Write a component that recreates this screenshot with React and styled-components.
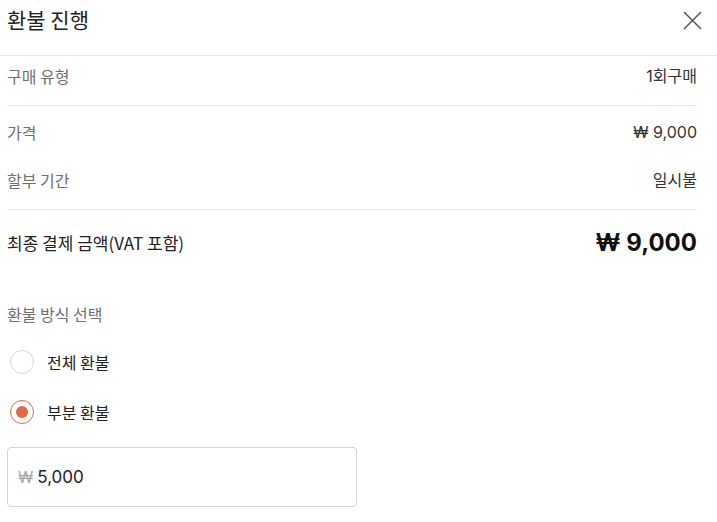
import React, { useState } from "react";
import styled, { createGlobalStyle } from "styled-components";

const Global = createGlobalStyle`
  html, body { margin: 0; padding: 0; background: #fff; }
  body { font-family: "Inter", "Noto Sans CJK KR", sans-serif; color: #222; }
  * { box-sizing: border-box; }
`;

const Panel = styled.div`
  width: 717px;
  background: #fff;
`;

const Header = styled.div`
  height: 56px;
  display: flex;
  align-items: flex-start;
  justify-content: space-between;
  padding: 4px 14px 0 7px;
  border-bottom: 1px solid #e6e6e6;
`;

const Title = styled.h1`
  margin: 0;
  font-size: 21px;
  line-height: 30px;
  font-weight: 400;
  color: #222;
  font-family: "Noto Sans CJK KR", sans-serif;
`;

const CloseButton = styled.button`
  border: 0;
  background: none;
  padding: 0;
  margin-top: 5px;
  width: 22px;
  height: 22px;
  display: flex;
  align-items: center;
  justify-content: center;
  cursor: pointer;
`;

const Body = styled.div`
  padding: 0 20px 0 7px;
`;

const Section = styled.div`
  display: flex;
  flex-direction: column;
  gap: ${(p) => p.$gap || 0}px;
  padding: ${(p) => p.$pad};
  border-bottom: ${(p) => (p.$divider ? "1px solid #e6e6e6" : "none")};
`;

const Row = styled.div`
  display: flex;
  justify-content: space-between;
  align-items: center;
  line-height: 22px;
  font-size: 16px;
`;

const Label = styled.span`
  color: #6f6f6f;
  font-family: "Noto Sans CJK KR", sans-serif;
`;

const Value = styled.span`
  color: #333;
`;

const TotalLabel = styled.span`
  color: #222;
  font-size: 17px;
  font-family: "Noto Sans CJK KR", sans-serif;
`;

const TotalValue = styled.span`
  font-size: 24px;
  font-weight: 700;
  color: #111;
  line-height: 24px;
`;

const SubTitle = styled.div`
  margin-top: 48px;
  font-size: 16px;
  line-height: 22px;
  color: #6f6f6f;
  font-family: "Noto Sans CJK KR", sans-serif;
`;

const RadioGroup = styled.div`
  display: flex;
  flex-direction: column;
  gap: 26px;
  margin-top: 25px;
`;

const RadioOption = styled.label`
  display: flex;
  align-items: center;
  gap: 13px;
  padding-left: 3px;
  height: 24px;
  cursor: pointer;
  font-size: 16px;
  color: #222;
  font-family: "Noto Sans CJK KR", sans-serif;
`;

const RadioCircle = styled.span`
  width: 24px;
  height: 24px;
  border-radius: 50%;
  border: 1px solid ${(p) => (p.$checked ? "#e0694a" : "#d6d6d6")};
  display: flex;
  align-items: center;
  justify-content: center;
  &::after {
    content: "";
    width: 12px;
    height: 12px;
    border-radius: 50%;
    background: ${(p) => (p.$checked ? "#e0694a" : "transparent")};
  }
`;

const AmountBox = styled.div`
  margin-top: 23px;
  width: 350px;
  height: 60px;
  border: 1px solid #d4d4d4;
  border-radius: 4px;
  display: flex;
  align-items: center;
  padding: 0 10px;
  gap: 4px;
  font-size: 17px;
`;

const Currency = styled.span`
  color: #a8a8ad;
  font-size: 16px;
`;

const AmountInput = styled.input`
  border: 0;
  outline: none;
  font: inherit;
  color: #222;
  padding: 0;
  width: 200px;
  background: transparent;
`;

export default function App() {
  const [mode, setMode] = useState("partial");
  const [amount, setAmount] = useState("5,000");
  return (
    <Panel>
      <Global />
      <Header>
        <Title>환불 진행</Title>
        <CloseButton aria-label="닫기">
          <svg width="19" height="19" viewBox="0 0 19 19">
            <path d="M1 1 L18 18 M18 1 L1 18" stroke="#555" strokeWidth="1.5" fill="none" />
          </svg>
        </CloseButton>
      </Header>
      <Body>
        <Section $pad="9px 0 18px" $divider>
          <Row>
            <Label>구매 유형</Label>
            <Value>1회구매</Value>
          </Row>
        </Section>
        <Section $pad="15px 0 18px" $gap={26} $divider>
          <Row>
            <Label>가격</Label>
            <Value>₩ 9,000</Value>
          </Row>
          <Row>
            <Label>할부 기간</Label>
            <Value>일시불</Value>
          </Row>
        </Section>
        <Section $pad="21px 0 0">
          <Row>
            <TotalLabel>최종 결제 금액(VAT 포함)</TotalLabel>
            <TotalValue>₩ 9,000</TotalValue>
          </Row>
        </Section>
        <SubTitle>환불 방식 선택</SubTitle>
        <RadioGroup>
          <RadioOption onClick={() => setMode("full")}>
            <RadioCircle $checked={mode === "full"} />
            전체 환불
          </RadioOption>
          <RadioOption onClick={() => setMode("partial")}>
            <RadioCircle $checked={mode === "partial"} />
            부분 환불
          </RadioOption>
        </RadioGroup>
        <AmountBox>
          <Currency>₩</Currency>
          <AmountInput value={amount} onChange={(e) => setAmount(e.target.value)} />
        </AmountBox>
      </Body>
    </Panel>
  );
}
